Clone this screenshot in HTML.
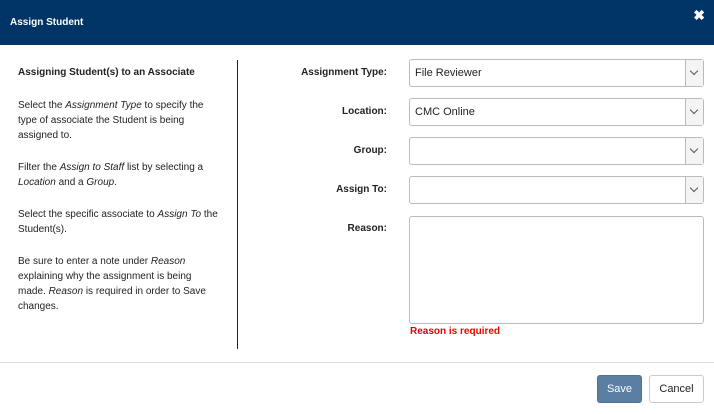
<!DOCTYPE html>
<html><head><style>
*{box-sizing:border-box;margin:0;padding:0}
body{width:714px;height:414px;background:#fff;font-family:"Liberation Sans",sans-serif;font-size:10px;color:#222;position:relative;overflow:hidden}
.hd{position:absolute;left:0;top:0;width:714px;height:45px;background:#003466;color:#fff;font-weight:bold;font-size:10px}
.hd span{position:absolute;left:10px;top:17px}
.x{position:absolute;right:9px;top:7px;font-size:14px}
.p{position:absolute;left:18px;width:200px;line-height:15px}
.div{position:absolute;left:237px;top:60px;width:1px;height:289px;background:#222}
.l{position:absolute;right:327px;font-weight:bold;font-size:10px}
.s{position:absolute;left:409px;width:295px;height:28px;border:1px solid #bbb;border-radius:3px;padding:7px 5px;font-size:11px}
.s i{position:absolute;right:0;top:0;width:18px;height:26px;border-left:1px solid #bbb;background:#f4f4f4}
.s i:after{content:"";position:absolute;left:5px;top:8px;width:5px;height:5px;border-right:1px solid #555;border-bottom:1px solid #555;transform:rotate(45deg)}
.err{position:absolute;left:410px;top:326px;color:#e00;font-weight:bold;font-size:10px}
.ft{position:absolute;left:0;top:362px;width:714px;height:1px;background:#ddd}
.b{position:absolute;top:375px;height:28px;border-radius:3px;font-size:11px;text-align:center;line-height:26px}
</style></head><body>
<div class="hd"><span>Assign Student</span><b class="x">✖</b></div>
<div class="p" style="top:65px;font-weight:bold">Assigning Student(s) to an Associate</div>
<div class="p" style="top:98px">Select the <i>Assignment Type</i> to specify the type of associate the Student is being assigned to.</div>
<div class="p" style="top:160px">Filter the <i>Assign to Staff</i> list by selecting a <i>Location</i> and a <i>Group</i>.</div>
<div class="p" style="top:207px">Select the specific associate to <i>Assign To</i> the Student(s).</div>
<div class="p" style="top:254px">Be sure to enter a note under <i>Reason</i> explaining why the assignment is being made. <i>Reason</i> is required in order to Save changes.</div>
<div class="div"></div>
<div class="l" style="top:67px">Assignment Type:</div>
<div class="l" style="top:106px">Location:</div>
<div class="l" style="top:145px">Group:</div>
<div class="l" style="top:184px">Assign To:</div>
<div class="l" style="top:223px">Reason:</div>
<div class="s" style="top:59px">File Reviewer<i></i></div>
<div class="s" style="top:98px">CMC Online<i></i></div>
<div class="s" style="top:137px"><i></i></div>
<div class="s" style="top:176px"><i></i></div>
<div class="s" style="top:216px;height:108px"></div>
<div class="err">Reason is required</div>
<div class="ft"></div>
<div class="b" style="left:597px;width:45px;background:#5b7ea3;border:1px solid #4e7197;color:#fff">Save</div>
<div class="b" style="left:649px;width:55px;border:1px solid #ccc;color:#222">Cancel</div>
</body></html>
